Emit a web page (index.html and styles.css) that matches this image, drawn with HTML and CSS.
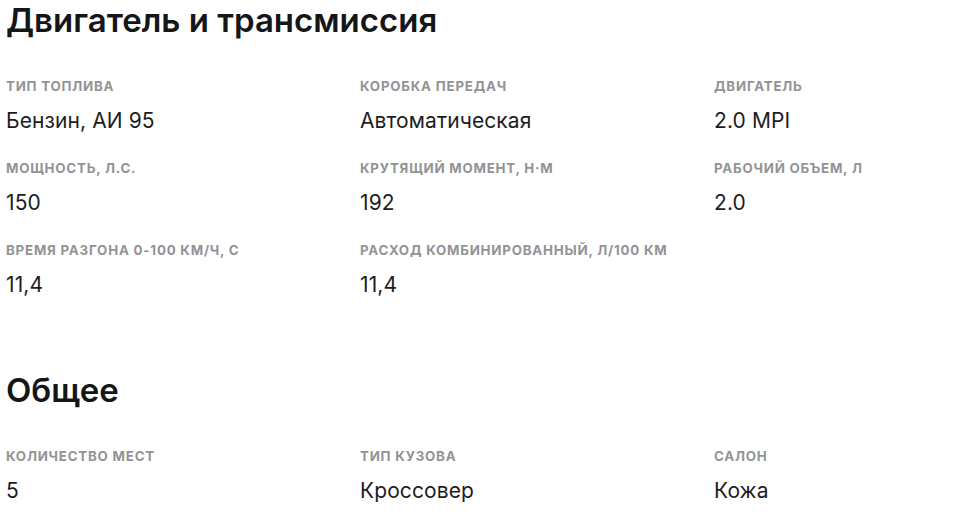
FILE: index.html
```html
<!DOCTYPE html>
<html lang="ru">
<head>
<meta charset="utf-8">
<link rel="stylesheet" href="styles.css">
</head>
<body>
<section class="section">
  <h2 class="title">Двигатель и трансмиссия</h2>
  <div class="grid">
    <div class="item"><div class="label">Тип топлива</div><div class="value">Бензин, АИ 95</div></div>
    <div class="item"><div class="label">Коробка передач</div><div class="value">Автоматическая</div></div>
    <div class="item"><div class="label">Двигатель</div><div class="value">2.0 MPI</div></div>
    <div class="item"><div class="label">Мощность, л.с.</div><div class="value">150</div></div>
    <div class="item"><div class="label">Крутящий момент, Н·м</div><div class="value">192</div></div>
    <div class="item"><div class="label">Рабочий объем, л</div><div class="value">2.0</div></div>
    <div class="item"><div class="label">Время разгона 0-100 км/ч, с</div><div class="value">11,4</div></div>
    <div class="item"><div class="label">Расход комбинированный, л/100 км</div><div class="value">11,4</div></div>
  </div>
</section>
<section class="section">
  <h2 class="title">Общее</h2>
  <div class="grid">
    <div class="item"><div class="label">Количество мест</div><div class="value">5</div></div>
    <div class="item"><div class="label">Тип кузова</div><div class="value">Кроссовер</div></div>
    <div class="item"><div class="label">Салон</div><div class="value">Кожа</div></div>
  </div>
</section>
</body>
</html>
```
FILE: styles.css
```css
html, body {
  margin: 0;
  padding: 0;
  background: #ffffff;
}
body {
  font-family: Inter, "Noto Sans", sans-serif;
  color: #1d1d1f;
  padding: 0 6px;
}
.section + .section {
  margin-top: 72px;
}
.title {
  margin: 0;
  font-size: 33px;
  line-height: 40px;
  font-weight: 600;
  color: #151618;
}
.grid {
  display: grid;
  grid-template-columns: 354px 354px 1fr;
  row-gap: 26px;
  margin-top: 38px;
}
.label {
  font-size: 13.3px;
  line-height: 16px;
  font-weight: 700;
  text-transform: uppercase;
  color: #929396;
  letter-spacing: 0.8px;
}
.value {
  margin-top: 14px;
  font-size: 21px;
  line-height: 26px;
  letter-spacing: 0.1px;
  color: #1d1d1f;
}
```
